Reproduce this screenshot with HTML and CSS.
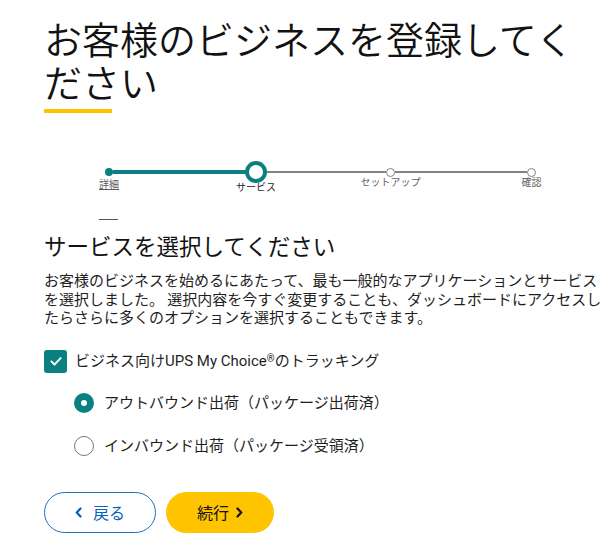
FILE: index.html
```html
<!DOCTYPE html>
<html lang="ja">
<head>
<meta charset="utf-8">
<title>お客様のビジネスを登録してください</title>
<link rel="stylesheet" href="styles.css">
</head>
<body>
<main class="page">
  <h1 class="title">お客様のビジネスを登録してください</h1>
  <div class="accent"></div>

  <div class="steps">
    <div class="step step-done"><span class="dot"></span><a class="label" href="#">詳細</a></div>
    <span class="bar bar-done"></span>
    <div class="step step-current"><span class="dot"></span><span class="label">サービス</span></div>
    <span class="bar bar-2"></span>
    <div class="step step-todo"><span class="dot"></span><span class="label">セットアップ</span></div>
    <span class="bar bar-3"></span>
    <div class="step step-todo"><span class="dot"></span><span class="label">確認</span></div>
  </div>

  <div class="divider"></div>

  <h2 class="subtitle">サービスを選択してください</h2>
  <p class="intro">お客様のビジネスを始めるにあたって、最も一般的なアプリケーションとサービスを選択しました。 選択内容を今すぐ変更することも、ダッシュボードにアクセスしたらさらに多くのオプションを選択することもできます。</p>

  <label class="check-row">
    <span class="checkbox">
      <svg viewBox="0 0 24 24" width="14" height="14"><polyline points="4,12.5 9.5,18 20,7" fill="none" stroke="#fff" stroke-width="3.2" stroke-linecap="round" stroke-linejoin="round"/></svg>
    </span>
    <span class="check-text">ビジネス向けUPS My Choice<sup class="reg">®</sup>のトラッキング</span>
  </label>

  <label class="radio-row radio-row-1">
    <span class="radio radio-on"></span>
    <span class="radio-text">アウトバウンド出荷（パッケージ出荷済）</span>
  </label>
  <label class="radio-row radio-row-2">
    <span class="radio"></span>
    <span class="radio-text">インバウンド出荷（パッケージ受領済）</span>
  </label>

  <div class="actions">
    <button class="btn btn-back" type="button">
      <svg viewBox="0 0 8 12" width="7" height="11"><polyline points="6.3,1.5 2,6 6.3,10.5" fill="none" stroke="currentColor" stroke-width="2.6" stroke-linecap="round" stroke-linejoin="round"/></svg>
      <span>戻る</span>
    </button>
    <button class="btn btn-next" type="button">
      <span>続行</span>
      <svg viewBox="0 0 8 12" width="7" height="11"><polyline points="1.7,1.5 6,6 1.7,10.5" fill="none" stroke="currentColor" stroke-width="2.6" stroke-linecap="round" stroke-linejoin="round"/></svg>
    </button>
  </div>
</main>
</body>
</html>
```
FILE: styles.css
```css
* { box-sizing: border-box; }

html, body {
  margin: 0;
  padding: 0;
  background: #ffffff;
}

body {
  font-family: Roboto, "Noto Sans CJK JP", sans-serif;
  color: #1f1f1f;
}

.page {
  padding: 16px 0 0 44px;
  width: 611px;
}

.title {
  margin: 0;
  max-width: 545px;
  font-family: "Noto Sans CJK JP", sans-serif;
  font-size: 38px;
  line-height: 43px;
  font-weight: 350;
  color: #121212;
}

.accent {
  width: 68px;
  height: 4px;
  margin-top: 7px;
  background: #ffc400;
}

/* progress */
.steps {
  display: flex;
  align-items: flex-start;
  margin: 48px 0 0 61px;
}

.step {
  display: flex;
  flex-direction: column;
  align-items: center;
}

.dot {
  display: block;
  border-radius: 50%;
}

.label {
  display: block;
  white-space: nowrap;
  font-family: "Noto Sans CJK JP", sans-serif;
  font-size: 10px;
  line-height: 12px;
  color: #616161;
}

.step-done { width: 8px; }
.step-done .dot {
  width: 8px;
  height: 8px;
  margin-top: 7px;
  background: #0a8080;
}
.step-done .label {
  margin-top: 2px;
  text-decoration: underline;
  color: #5a5a5a;
}

.step-current { width: 22px; }
.step-current .dot {
  width: 22px;
  height: 22px;
  border: 4px solid #0a8080;
  background: #fff;
}
.step-current .label {
  margin-top: -2px;
  color: #242424;
}

.step-todo { width: 9px; }
.step-todo .dot {
  width: 9px;
  height: 9px;
  margin-top: 6.5px;
  border: 1.5px solid #86817a;
  background: #fff;
}
.step-todo .label {
  margin-top: -0.5px;
}

.bar {
  display: block;
  height: 2px;
  margin-top: 10px;
  background: #86817a;
}
.bar-done {
  width: 132px;
  height: 4px;
  margin-top: 9px;
  background: #0a8080;
}
.bar-2 { width: 119px; }
.bar-3 { width: 132px; }

.divider {
  width: 19px;
  height: 1px;
  margin: 26px 0 0 55px;
  background: #555;
}

.subtitle {
  margin: 10.5px 0 0;
  font-family: "Noto Sans CJK JP", sans-serif;
  font-size: 22.5px;
  line-height: 28px;
  font-weight: 400;
  color: #121212;
}

.intro {
  margin: 12.5px 0 0;
  width: 566px;
  font-family: "Noto Sans CJK JP", sans-serif;
  font-size: 15px;
  line-height: 18.5px;
  color: #1f1f1f;
}

.check-row {
  display: flex;
  align-items: center;
  gap: 8px;
  margin-top: 23px;
  height: 23px;
}

.checkbox {
  width: 23px;
  height: 23px;
  border-radius: 3px;
  background: #0a8080;
  display: flex;
  align-items: center;
  justify-content: center;
}

.check-text,
.radio-text {
  font-size: 15px;
  line-height: 20px;
  color: #1f1f1f;
}

.reg {
  font-size: 10px;
  vertical-align: top;
  position: relative;
  top: -2px;
}

.radio-row {
  display: flex;
  align-items: center;
  gap: 10px;
  height: 20px;
  margin-left: 30px;
}
.radio-row-1 { margin-top: 20px; }
.radio-row-2 { margin-top: 23px; }

.radio {
  width: 20px;
  height: 20px;
  border-radius: 50%;
  border: 1.5px solid #767676;
  background: #fff;
}
.radio-on {
  border: 7px solid #0a8080;
}

.actions {
  display: flex;
  gap: 10px;
  margin-top: 36px;
}

.btn {
  height: 41px;
  border-radius: 21px;
  display: flex;
  align-items: center;
  justify-content: center;
  font-family: "Noto Sans CJK JP", sans-serif;
  font-size: 16px;
  padding: 0;
  cursor: pointer;
}

.btn-back {
  width: 112px;
  gap: 11px;
  background: #fff;
  border: 1px solid #1f6fc1;
  color: #0662bb;
}

.btn-next {
  width: 108px;
  gap: 7px;
  background: #ffc400;
  border: none;
  color: #121212;
}
```
